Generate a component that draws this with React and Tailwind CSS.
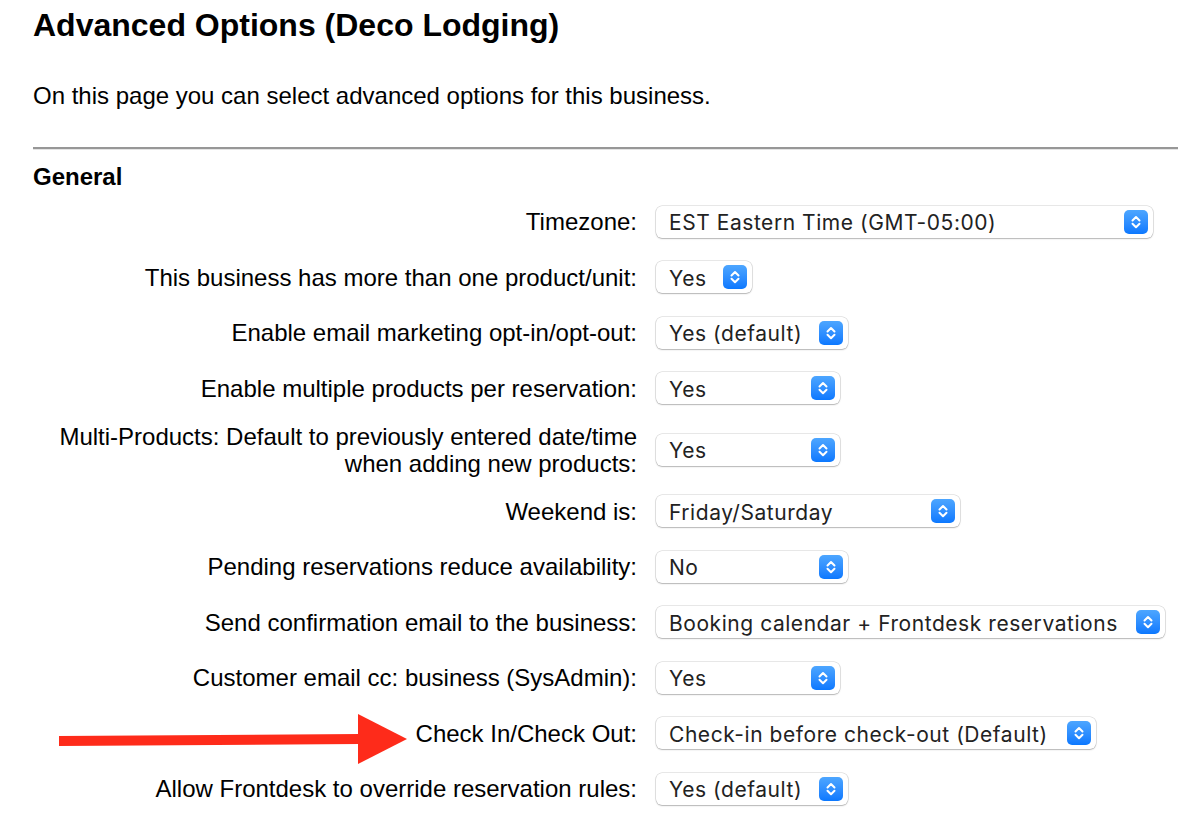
import React from "react";

const rows = [
  { label: "Timezone:", value: "EST Eastern Time (GMT-05:00)", w: "w-[497px]" },
  { label: "This business has more than one product/unit:", value: "Yes", w: "w-[96px]" },
  { label: "Enable email marketing opt-in/opt-out:", value: "Yes (default)", w: "w-[192px]" },
  { label: "Enable multiple products per reservation:", value: "Yes", w: "w-[184px]" },
  {
    label: ["Multi-Products: Default to previously entered date/time", "when adding new products:"],
    value: "Yes",
    w: "w-[184px]",
    multi: true,
  },
  { label: "Weekend is:", value: "Friday/Saturday", w: "w-[304px]" },
  { label: "Pending reservations reduce availability:", value: "No", w: "w-[192px]" },
  { label: "Send confirmation email to the business:", value: "Booking calendar + Frontdesk reservations", w: "w-[509px]" },
  { label: "Customer email cc: business (SysAdmin):", value: "Yes", w: "w-[184px]" },
  { label: "Check In/Check Out:", value: "Check-in before check-out (Default)", w: "w-[440px]" },
  { label: "Allow Frontdesk to override reservation rules:", value: "Yes (default)", w: "w-[192px]" },
];

function Stepper() {
  return (
    <div className="ml-auto mr-[5px] flex h-[24px] w-[24px] shrink-0 items-center justify-center rounded-[5px] bg-gradient-to-b from-[#4da6ff] to-[#0a78ff]">
      <svg width="24" height="24" viewBox="0 0 24 24" fill="none">
        <polyline points="8.5,10.5 12,7 15.5,10.5" stroke="white" strokeWidth="2" strokeLinecap="round" strokeLinejoin="round" />
        <polyline points="8.5,13.8 12,17.3 15.5,13.8" stroke="white" strokeWidth="2" strokeLinecap="round" strokeLinejoin="round" />
      </svg>
    </div>
  );
}

function Select({ value, w }) {
  return (
    <div
      className={`${w} flex h-[32px] shrink-0 items-center rounded-[6px] bg-white pl-[13px] shadow-[0_0_0_0.5px_rgba(0,0,0,0.18),0_1px_1.5px_rgba(0,0,0,0.22)]`}
    >
      <span className="mt-[2px] whitespace-nowrap font-['Inter',sans-serif] text-[21px] leading-none tracking-[0.55px] text-[#222222]">
        {value}
      </span>
      <Stepper />
    </div>
  );
}

export default function App() {
  return (
    <div className="relative min-h-[824px] bg-white pl-[33px] font-['Liberation_Sans',Arial,sans-serif] text-black">
      <h1 className="mt-[7px] text-[32px] font-bold leading-[36px]">Advanced Options (Deco Lodging)</h1>
      <p className="mt-[39px] text-[24px] leading-[28px]">On this page you can select advanced options for this business.</p>
      <div className="mt-[37px] border-t-[2px] border-b border-t-[#979797] border-b-[#e4e4e4]" />
      <h2 className="mt-[13px] text-[24px] font-bold leading-[28px]">General</h2>
      <div className="mt-[3px] flex flex-col">
        {rows.map((r, i) => (
          <div key={i} className={`flex items-center gap-[19px] ${r.multi ? "h-[67.5px]" : "h-[55.5px]"}`}>
            <div className="w-[604px] shrink-0 text-right text-[24px] leading-[27px]">
              {Array.isArray(r.label) ? (
                <>
                  <div>{r.label[0]}</div>
                  <div>{r.label[1]}</div>
                </>
              ) : (
                r.label
              )}
            </div>
            <Select value={r.value} w={r.w} />
          </div>
        ))}
      </div>
      <svg className="absolute left-0 top-[700px]" width="420" height="64" viewBox="0 700 420 64">
        <polygon points="59,729 360,727 360,737 59,739" fill="#fe2b1a" />
        <polygon points="358,707 407,732 358,757" fill="#fe2b1a" />
      </svg>
    </div>
  );
}
